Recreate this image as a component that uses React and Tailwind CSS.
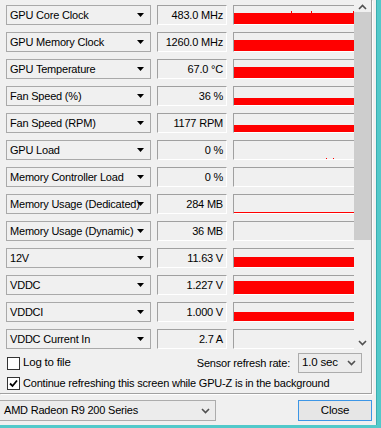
import React from 'react'

const rows = [
  { name: 'GPU Core Clock', value: '483.0 MHz', bar: 11, spikes: [57, 77, 119] },
  { name: 'GPU Memory Clock', value: '1260.0 MHz', bar: 11 },
  { name: 'GPU Temperature', value: '67.0 °C', bar: 11 },
  { name: 'Fan Speed (%)', value: '36 %', bar: 7 },
  { name: 'Fan Speed (RPM)', value: '1177 RPM', bar: 7 },
  { name: 'GPU Load', value: '0 %', dots: [92, 99] },
  { name: 'Memory Controller Load', value: '0 %' },
  { name: 'Memory Usage (Dedicated)', value: '284 MB', bar: 1 },
  { name: 'Memory Usage (Dynamic)', value: '36 MB' },
  { name: '12V', value: '11.63 V', bar: 10 },
  { name: 'VDDC', value: '1.227 V', bar: 13 },
  { name: 'VDDCI', value: '1.000 V', bar: 9 },
  { name: 'VDDC Current In', value: '2.7 A' },
]

function Chevron({ up }) {
  return (
    <svg width="9" height="6" viewBox="0 0 9 6" className="block">
      <path d={up ? 'M1 5 L4.5 1.5 L8 5' : 'M1 1 L4.5 4.5 L8 1'} fill="none" stroke="#505050" strokeWidth="1.6" />
    </svg>
  )
}

function SensorRow({ row }) {
  return (
    <div className="flex h-[20px] gap-[6px]">
      <div className="relative w-[145px] border border-[#a9a9a9] bg-[#f0f0f0] pl-[3px] leading-[18px] whitespace-nowrap overflow-hidden">
        {row.name}
        <svg width="7" height="4" viewBox="0 0 7 4" className="absolute right-[6px] top-[7px]">
          <path d="M0 0 H7 L3.5 4 Z" fill="#000" />
        </svg>
      </div>
      <div className="w-[70px] border-t border-l border-[#a0a0a0] border-r-white border-b-white border-r border-b pr-[3px] text-right leading-[18px] whitespace-nowrap">
        {row.value}
      </div>
      <div className="relative flex-1 border-t border-l border-[#a0a0a0] border-b border-b-white flex flex-col justify-end">
        {row.bar ? <div className="bg-[#ff0000] w-full" style={{ height: row.bar }} /> : null}
        {row.spikes && row.spikes.map((x) => (
          <div key={x} className="absolute bottom-0 w-[1px] h-[13px] bg-[#ff0000]" style={{ left: x }} />
        ))}
        {row.dots && row.dots.map((x) => (
          <div key={x} className="absolute bottom-0 w-[1px] h-[1px] bg-[#ff0000]" style={{ left: x }} />
        ))}
      </div>
    </div>
  )
}

function Checkbox({ checked }) {
  return (
    <div className="w-[13px] h-[13px] border border-[#333] bg-white flex items-center justify-center shrink-0">
      {checked && (
        <svg width="9" height="9" viewBox="0 0 9 9">
          <path d="M1 4.5 L3.5 7 L8 1.5" fill="none" stroke="#000" strokeWidth="1.8" />
        </svg>
      )}
    </div>
  )
}

export default function App() {
  return (
    <div className="w-[381px] h-[428px] bg-[#f0f0f0] text-[11px] tracking-[-0.2px] text-black font-['Liberation_Sans',Arial,sans-serif] flex flex-col overflow-hidden">
      <div className="flex h-[425px]">
        <div className="w-[376px] flex flex-col">
          <div className="w-[372px] h-[394px] border-r border-b border-[#a0a0a0] shadow-[1px_1px_0_#fff] flex flex-col">
            <div className="flex h-[349px]">
              <div className="w-[354px] flex flex-col gap-[7px] pt-[5px] pl-[6px]">
                {rows.map((r) => (
                  <SensorRow key={r.name} row={r} />
                ))}
              </div>
              <div className="w-[17px] flex flex-col bg-[#f0f0f0]">
                <div className="h-[12px] flex items-center justify-center pt-[1px]">
                  <Chevron up />
                </div>
                <div className="h-[228px] bg-[#cdcdcd]" />
                <div className="flex-1" />
                <div className="h-[12px] flex items-center justify-center">
                  <Chevron />
                </div>
              </div>
            </div>
            <div className="flex flex-col pl-[7px] pr-[9px]">
              <div className="flex items-center h-[20px] mt-[4px]">
                <Checkbox />
                <span className="ml-[3px] text-[11.5px]">Log to file</span>
                <span className="ml-auto mr-[8px] text-[11px]">Sensor refresh rate:</span>
                <div className="w-[64px] h-[20px] border border-[#acacac] bg-[#ececec] flex items-center pl-[3px] pr-[5px] text-[11.5px]">
                  1.0 sec
                  <span className="ml-auto">
                    <Chevron />
                  </span>
                </div>
              </div>
              <div className="flex items-center h-[13px] mt-[4px]">
                <Checkbox checked />
                <span className="ml-[3px] whitespace-nowrap text-[11px]">Continue refreshing this screen while GPU-Z is in the background</span>
              </div>
            </div>
          </div>
          <div className="flex mt-[6px] h-[21px]">
            <div className="w-[217px] -ml-[1px] border border-[#acacac] bg-[#ececec] flex items-center pl-[4px] pr-[5px] text-[11px]">
              AMD Radeon R9 200 Series
              <span className="ml-auto">
                <Chevron />
              </span>
            </div>
            <div className="ml-auto mr-[4px] w-[74px] border border-[#3c96e6] bg-[#e6e6e6] flex items-center justify-center text-[11.5px]">
              Close
            </div>
          </div>
        </div>
        <div className="w-[5px] bg-[#52c9ca] border-l border-[#3aadb0]" />
      </div>
      <div className="h-[3px] bg-[#52c9ca]" />
    </div>
  )
}
